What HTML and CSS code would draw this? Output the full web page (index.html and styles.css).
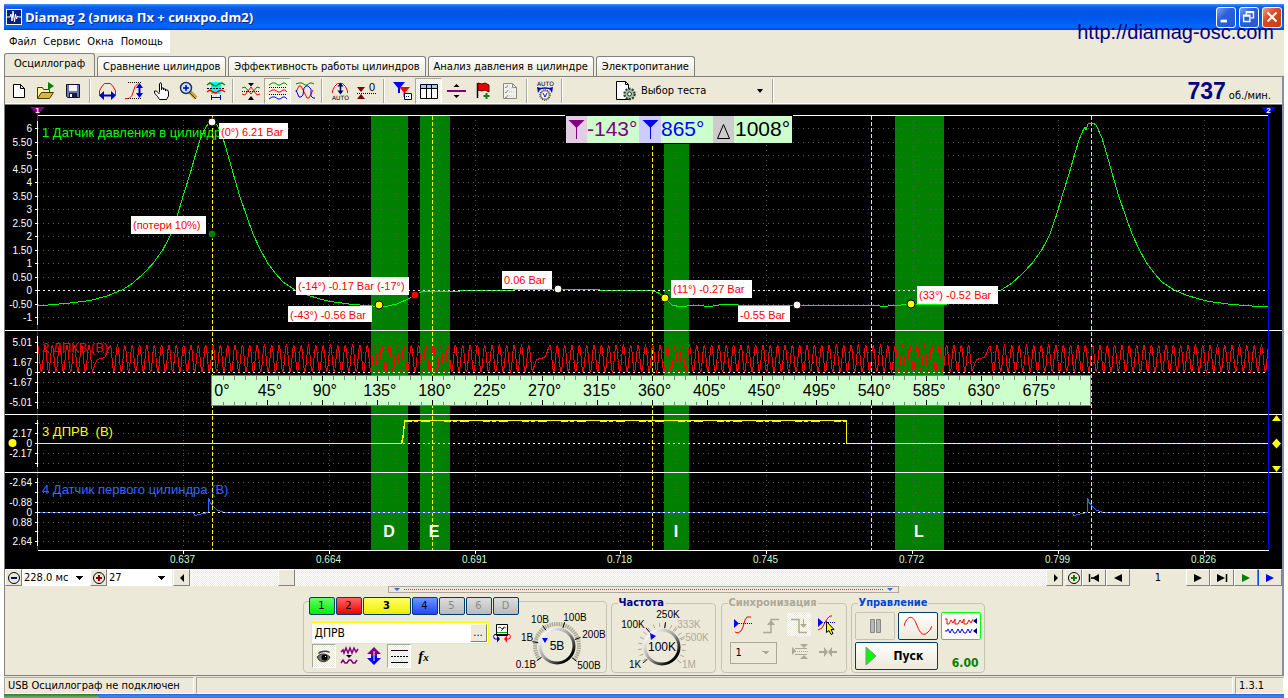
FILE: index.html
```html
<!DOCTYPE html>
<html lang="ru">
<head>
<meta charset="utf-8">
<title>Diamag 2</title>
<link rel="stylesheet" href="styles.css">
</head>
<body>
<div class="window">
  <header class="titlebar">
    <svg class="app-icon" viewBox="0 0 16 16"><rect width="16" height="16" fill="#fff"/><rect x="1" y="1" width="14" height="14" fill="#0a1f80"/><path d="M1 8h3l1-3 1 7 1-10 1.500 11 1-8 1 5 1-3 1 1h3" fill="none" stroke="#fff"/></svg>
    <h1 class="title">Diamag 2 (эпика Пх + синхро.dm2)</h1>
    <button class="win-btn" aria-label="Свернуть"><svg viewBox="0 0 20 20"><path d="M4 13h7v3H4z" fill="#fff"/></svg></button>
    <button class="win-btn" aria-label="Восстановить"><svg viewBox="0 0 20 20"><path d="M7 8V4h8v7h-3M7 5h8" fill="none" stroke="#fff" stroke-width="1.500"/><path d="M4 8h7v7H4zM4 9h7" fill="none" stroke="#fff" stroke-width="1.500"/></svg></button>
    <button class="win-btn win-close" aria-label="Закрыть"><svg viewBox="0 0 20 20"><path d="M5 5l10 10M15 5L5 15" stroke="#fff" stroke-width="2.200"/></svg></button>
    <a class="site-link" href="#">http://diamag-osc.com</a>
  </header>

  <nav class="menubar">
    <button>Файл</button><button>Сервис</button><button>Окна</button><button>Помощь</button>
  </nav>

  <div class="tabs" role="tablist">
    <button class="tab tab-active" role="tab">Осциллограф</button>
    <button class="tab" role="tab">Сравнение цилиндров</button>
    <button class="tab" role="tab">Эффективность работы цилиндров</button>
    <button class="tab" role="tab">Анализ давления в цилиндре</button>
    <button class="tab" role="tab">Электропитание</button>
  </div>

  <main class="frame">
    <div class="toolbar">
      <button class="tool" aria-label="Новый"><svg viewBox="0 0 20 20"><path d="M4.500 3.500h7l4 4v9h-11zM11.500 3.500v4h4" fill="#fff" stroke="#000"/></svg></button>
      <button class="tool" aria-label="Открыть"><svg viewBox="0 0 20 20"><path d="M1.500 17.500v-11h5l1 2h6v3" fill="#fff0a0" stroke="#404000"/><path d="M1.500 17.500l4-6h12l-4 6z" fill="#d8b840" stroke="#404000"/><path d="M12 1l6 4-6 4z" fill="#008000"/></svg></button>
      <button class="tool" aria-label="Сохранить"><svg viewBox="0 0 20 20"><path d="M3.500 3.500h13v13h-12l-1-1z" fill="#6878a8" stroke="#101030"/><path d="M6 4h8v6H6z" fill="#f4f4f8"/><path d="M6 12h8v4H6z" fill="#181838"/><path d="M7 13h2v3H7z" fill="#fff"/></svg></button>
      <span class="sep"></span>
      <button class="tool" aria-label="Масштаб по X"><svg viewBox="0 0 20 20"><path d="M1.500 14v-4l2-4 3-3.500h6l3 3.500 2 4v4" fill="none" stroke="#f00"/><path d="M4 14.500h11" stroke="#00a" stroke-width="2"/><path d="M6 10v9l-5-4.500zM13 10v9l5-4.500z" fill="#00c"/></svg></button>
      <button class="tool" aria-label="Масштаб по Y"><svg viewBox="0 0 20 20"><path d="M0 17.500h4l3-3 3-9 3-3" fill="none" stroke="#f00"/><path d="M3 1.500h14M3 17.500h14" stroke="#000" stroke-dasharray="1 1"/><path d="M14.500 5v9" stroke="#00c" stroke-width="2"/><path d="M11 7h7l-3.500-5zM11 12h7l-3.500 5z" fill="#00c"/></svg></button>
      <button class="tool" aria-label="Рука"><svg viewBox="0 0 20 20"><path d="M7.500 11.500V3l1-1.500L9.500 3v6-2h2v2-1h2v2-1h2l1 2v4l-2 3.500H7.500l-2-3-3-3.500v-2h2l3 3" fill="#fff" stroke="#000"/></svg></button>
      <button class="tool" aria-label="Лупа"><svg viewBox="0 0 20 20"><path d="M11 11l6 6" stroke="#c8a040" stroke-width="4"/><path d="M11 12l6 6" stroke="#404040"/><circle cx="7" cy="7" r="5.500" fill="#c8e8ff" stroke="#203060" stroke-width="1.500"/><path d="M4 7h6M7 4v6" stroke="#00a" stroke-width="1.500"/></svg></button>
      <button class="tool" aria-label="Участок"><svg viewBox="0 0 20 20"><path d="M5 1h10v12H5z" fill="#0ff"/><path d="M1 4l3-2 3 2 3 1 3-2 3-1 3 2" fill="none" stroke="#080" stroke-width="1.500"/><path d="M1 7.500h18" stroke="#000" stroke-dasharray="2 1"/><path d="M1 11l3-2 3 2 3 1 3-2 3-1 3 2" fill="none" stroke="#f00" stroke-width="1.500"/><path d="M5.500 14v5M14.500 14v5M6 16.500h8" stroke="#00a"/></svg></button>
      <span class="sep"></span>
      <button class="tool" aria-label="Центрировать"><svg viewBox="0 0 20 20"><path d="M1 7l3-1 6 7 6-7 3 1" fill="none" stroke="#080"/><path d="M1 13l3 1 6-8 6 8 3-1" fill="none" stroke="#f00"/><path d="M1 10.500h18" stroke="#000" stroke-dasharray="1 1"/><path d="M7 2h6l-3 3.500zM7 19h6l-3-4z"/></svg></button>
      <button class="tool tool-down" aria-label="Раздельно"><svg viewBox="0 0 20 20"><path d="M1 4l3-2h3l3 2h2l3-2h2l2 2" fill="none" stroke="#080"/><path d="M1 6.500h18M1 13.500h18" stroke="#000" stroke-dasharray="1 1"/><path d="M1 11l3-2h3l3 2h2l3-2h2l2 2" fill="none" stroke="#f00"/><path d="M1 18l3-2h3l3 2h2l3-2h2l2 2" fill="none" stroke="#00f"/></svg></button>
      <button class="tool" aria-label="Совместно"><svg viewBox="0 0 20 20"><path d="M1 3l3-1h3l3 2h2l3-2h2l2 1" fill="none" stroke="#080"/><path d="M1 11l3-6h2l6 12h2l4-8" fill="none" stroke="#f00"/><path d="M1 9l3 7h2l2-2 1-7 2-2h2l3 3v7l2 2h2" fill="none" stroke="#00f"/></svg></button>
      <span class="sep"></span>
      <button class="tool" aria-label="Авто"><svg viewBox="0 0 20 20"><path d="M2.500 12v-2l2-4.500 3-3h5l3 3 2 4.500v2" fill="none" stroke="#f00"/><path d="M10.500 4v8" stroke="#006" stroke-width="1.500"/><path d="M7.500 5.500h6l-3-4zM7.500 9.500h6l-3 4z" fill="#006"/><text class="tiny" x="2" y="19">AUTO</text></svg></button>
      <button class="tool" aria-label="Ноль"><svg viewBox="0 0 20 20"><path d="M0 6h8l-4 5z" fill="#800000"/><path d="M0 18h8l-4-5z" fill="#800000"/><path d="M0 12.500h20" stroke="#000" stroke-dasharray="1 1"/><text class="zero" x="12" y="10">0</text></svg></button>
      <span class="sep"></span>
      <button class="tool" aria-label="Фильтр"><svg viewBox="0 0 20 20"><path d="M1 1h12L8 7v5H6V7z" fill="#00f"/><path d="M7 6h11l-4.500 5v5h-2v-5z" fill="#f00"/><path d="M12.500 12.500h7v6h-7z" fill="#fff" stroke="#006"/><path d="M14 15.500h4" stroke="#006" stroke-dasharray="1 1"/></svg></button>
      <button class="tool tool-down" aria-label="Таблица"><svg viewBox="0 0 20 20"><path d="M1.500 3.500h17v14h-17z" fill="#fff" stroke="#000"/><path d="M2 4h16v3H2z" fill="#a0c8f8"/><path d="M1.500 7.500h17M7.500 4v13M12.500 4v13" stroke="#000"/></svg></button>
      <button class="tool" aria-label="Разделить"><svg viewBox="0 0 20 20"><path d="M1 10h19" stroke="#800080" stroke-width="2"/><path d="M7.500 6h6l-3-3zM7.500 14h6l-3 3z"/></svg></button>
      <button class="tool" aria-label="Метка"><svg viewBox="0 0 20 20"><path d="M4.500 2v15" stroke="#000" stroke-width="1.500"/><path d="M5 2l4 1 3-1 4 2v7l-4-2-3 1-4-1z" fill="#e00" stroke="#600"/><path d="M13.500 12v6M10.500 15h6" stroke="#080" stroke-width="2"/></svg></button>
      <button class="tool" aria-label="Список"><svg viewBox="0 0 20 20"><path d="M3.500 2.500h9l4 4v11h-13zM12.500 2.500v4h4" fill="#f4f3ea" stroke="#888"/><path d="M5 6l1 1 2-3M5 11l1 1 2-3M5 16l1 1 2-3" fill="none" stroke="#888"/><path d="M9 7h5M9 11h5M9 15h5" stroke="#bbb" stroke-dasharray="1 1"/></svg></button>
      <span class="sep"></span>
      <button class="tool" aria-label="Авто V"><svg viewBox="0 0 20 20"><text class="tiny" x="2" y="5">AUTO</text><path d="M4 8.500c2-2 10-2 12 0" fill="none" stroke="#00c" stroke-width="1.500"/><path d="M2 6l4 1-3 5zM18 6l-4 1 3 5z" fill="#00c"/><circle cx="10" cy="14" r="5.200" fill="none" stroke="#000" stroke-dasharray="1 1"/><circle cx="10" cy="14" r="4.200" fill="#fff" stroke="#555"/><path d="M8 12l2 4 2-4" fill="none" stroke="#00f"/></svg></button>
      <span class="sep"></span>
      <button class="test-select">
        <svg viewBox="0 0 20 20"><path d="M.5.500h9l3 3v15H.5z" fill="#fff" stroke="#000"/><path d="M9.500.500v3h3" fill="none" stroke="#000"/><circle cx="13.500" cy="13" r="5" fill="#a8c0a8" stroke="#304030" stroke-width="2.500" stroke-dasharray="2 1.140"/><circle cx="13.500" cy="13" r="4" fill="#a8c0a8"/><circle cx="13.500" cy="13" r="2" fill="#e8f0e8" stroke="#304030"/></svg>
        <span>Выбор теста</span><i class="caret"></i>
      </button>
      <span class="sep"></span>
      <div class="rpm"><strong>737</strong><span>об./мин.</span></div>
    </div>

    <svg class="scope" id="scope" viewBox="5 105 1277 464" role="img" aria-label="Осциллограммы"></svg>

    <div class="scroll-row">
      <button class="sq" aria-label="Уменьшить"><svg viewBox="0 0 14 14"><circle cx="7" cy="7" r="5.500" fill="none" stroke="#000"/><path d="M4 7h6" stroke="#000080" stroke-width="2"/></svg></button>
      <select class="time-select" aria-label="Развертка"><option>228.0 мс</option></select>
      <button class="sq" aria-label="Увеличить"><svg viewBox="0 0 14 14"><circle cx="7" cy="7" r="5.500" fill="none" stroke="#000"/><path d="M4 7h6M7 4v6" stroke="#800000" stroke-width="2"/></svg></button>
      <select class="frame-select" aria-label="Кадр"><option>27</option></select>
      <button class="sq" aria-label="Влево"><svg viewBox="0 0 14 14"><path d="M9 3v8L5 7z"/></svg></button>
      <div class="track"><span class="thumb"></span></div>
      <button class="sq" aria-label="Вправо"><svg viewBox="0 0 14 14"><path d="M6 3v8l4-4z"/></svg></button>
      <button class="sq sq-gap" aria-label="Добавить"><svg viewBox="0 0 14 14"><circle cx="7" cy="7" r="5.500" fill="none" stroke="#000"/><path d="M4 7h6M7 4v6" stroke="#008000" stroke-width="2"/></svg></button>
      <button class="nav" aria-label="Первый"><svg viewBox="0 0 14 14"><path d="M2.500 3v8M4 7h2" stroke="#000" stroke-width="1.500"/><path d="M12 3v8L5 7z"/></svg></button>
      <button class="nav" aria-label="Назад"><svg viewBox="0 0 14 14"><path d="M11 3v8L3 7z"/></svg></button>
      <output class="page-no">1</output>
      <button class="nav" aria-label="Вперед"><svg viewBox="0 0 14 14"><path d="M3 3v8l8-4z"/></svg></button>
      <button class="nav" aria-label="Последний"><svg viewBox="0 0 14 14"><path d="M11.500 3v8" stroke="#000" stroke-width="1.500"/><path d="M2 3v8l8-4z"/></svg></button>
      <button class="nav" aria-label="Играть"><svg viewBox="0 0 14 14"><path d="M3 3v8l8-4z" fill="#008000"/></svg></button>
      <button class="nav nav-next" aria-label="Играть дальше"><svg viewBox="0 0 14 14"><path d="M3 3v8l8-4z" fill="#00f"/></svg></button>
    </div>
    <div class="splitter"><i></i><span></span><i></i></div>

    <div class="panels">
      <section class="group channel-group">
        <div class="channel-side">
          <div class="channels">
            <button class="ch ch-1">1</button><button class="ch ch-2">2</button><button class="ch ch-3">3</button><button class="ch ch-4">4</button><button class="ch ch-off" disabled>5</button><button class="ch ch-off" disabled>6</button><button class="ch ch-off" disabled>D</button>
          </div>
          <div class="name-row">
            <div class="name-box"><input type="text" value="ДПРВ" aria-label="Имя канала"><button aria-label="Выбрать">...</button></div>
            <button class="icon-btn" aria-label="Датчик"><svg viewBox="0 0 20 20"><path d="M4.500 1.500h11v11h-11z" fill="#fff" stroke="#000"/><path d="M6 5l2-1 2 2 2-2 2 1M9 8l3-3" fill="none" stroke="#444"/><path d="M5 9.500h10" stroke="#0a0"/><path d="M5 11h10v2H5z"/><path d="M4 11.500H2.500l-1 2 1 2.500H5" fill="none" stroke="#000080"/><path d="M5 12.500v7l3-3.500z" fill="#000080"/><path d="M16 11.500h1.500l1 2-1 2.500H15" fill="none" stroke="#f00"/><path d="M15 12.500v7l-3-3.500z" fill="#f00"/></svg></button>
          </div>
          <div class="icon-row">
            <button class="icon-btn icon-down" aria-label="Видимость"><svg viewBox="0 0 20 20"><path d="M4 7c3-3 9-3 12-1l-1 1c-3-2-7-1-10 1z" fill="#444"/><path d="M3 11c3-4 9-4 13 0-2 5-8 6-11 3z" fill="#777" stroke="#333"/><circle cx="10.500" cy="11.500" r="3"/><path d="M11 10h1v1h-1z" fill="#fff"/></svg></button>
            <button class="icon-btn" aria-label="Фильтр"><svg viewBox="0 0 20 20"><path d="M2 6l2-2 1 3 2-5 2 5 2-5 2 5 2-5 2 4 2-3M2 17l2-3 2 3h2l2-3h2l2 3h2l2-3" fill="none" stroke="#800080" stroke-width="1.500"/><path d="M7 9h6l-3 3z"/></svg></button>
            <button class="icon-btn" aria-label="Сдвиг"><svg viewBox="0 0 20 20"><path d="M10 1l7 7h-4v2H7V8H3z" fill="#800080"/><path d="M10 19l7-7h-4v-2H7v2H3z" fill="#00f"/><path d="M10 5v10" stroke="#ece9d8"/></svg></button>
            <button class="icon-btn icon-down" aria-label="Пороги"><svg viewBox="0 0 20 20"><path d="M2 4.500h17M2 16.500h17" stroke="#000"/><path d="M2 10.500h17" stroke="#000" stroke-dasharray="2 1"/></svg></button>
            <button class="icon-btn fx" aria-label="Функция"><i>f<small>x</small></i></button>
          </div>
        </div>
        <svg class="knob" id="knob-volts" viewBox="519 608 87 63"></svg>
      </section>

      <fieldset class="group freq-group">
        <legend>Частота</legend>
        <svg class="knob" id="knob-freq" viewBox="612 609 103 61"></svg>
      </fieldset>

      <fieldset class="group sync-group">
        <legend class="muted">Синхронизация</legend>
        <div class="sync-row">
          <button class="icon-btn" aria-label="Запуск"><svg viewBox="0 0 20 20"><path d="M2 17l3 1 3-2 2-4 2-7 2-3h4" fill="none" stroke="#f00"/><path d="M2 8.500h17" stroke="#00a" stroke-dasharray="1 1"/><path d="M1 4v9l5-4.500z" fill="#00f"/></svg></button>
          <button class="icon-btn" aria-label="Фронт"><svg viewBox="0 0 20 20"><path d="M2 17.500h8V4.500h8" fill="none" stroke="#aca899" stroke-width="1.500"/><path d="M6 10h8l-4-5z" fill="#aca899"/></svg></button>
          <button class="icon-btn icon-dither" aria-label="Спад"><svg viewBox="0 0 20 20"><path d="M2 4.500h8v13h8" fill="none" stroke="#aca899" stroke-width="1.500"/><path d="M11 9h7l-3.500 4z" fill="#aca899"/><path d="M14.500 4v6" stroke="#aca899"/></svg></button>
          <button class="icon-btn" aria-label="Уровень"><svg viewBox="0 0 20 20"><path d="M1 15l4-2 5-9 3-3h2" fill="none" stroke="#f00"/><path d="M1 7.500h18" stroke="#00a" stroke-dasharray="1 1"/><path d="M1 3v9l5-4.500z" fill="#00f"/><path d="M9.500 6.500v11l2.500-2 2 4 2-1-2-4h3z" fill="#ff0" stroke="#000"/></svg></button>
        </div>
        <div class="sync-row">
          <select class="sync-select" aria-label="Канал синхронизации" disabled><option>1</option></select>
          <button class="icon-btn" aria-label="Диапазон"><svg viewBox="0 0 20 20"><path d="M2 5v8l4-4zM10 2h8l-4 4zM10 17h8l-4-4z" fill="#aca899"/><path d="M5 6.500h12M5 12.500h12" stroke="#aca899"/><path d="M5 9.500h13" stroke="#aca899" stroke-dasharray="1 1"/></svg></button>
          <button class="icon-btn" aria-label="Сжать"><svg viewBox="0 0 20 20"><path d="M1 9h5V5l4 5-4 5v-4H1zM19 9h-5V5l-4 5 4 5v-4h5z" fill="#aca899"/></svg></button>
        </div>
      </fieldset>

      <fieldset class="group run-group">
        <legend class="bright">Управление</legend>
        <div class="run-grid">
          <button class="xp xp-off" aria-label="Пауза" disabled><svg viewBox="0 0 28 20"><path d="M9.500 3.500h4v13h-4zM15.500 3.500h4v13h-4z" fill="#b8b8b8" stroke="#888"/></svg></button>
          <button class="xp" aria-label="Один сигнал"><svg viewBox="0 0 28 20"><path d="M0 10C3-1 9-1 12 7s6 14 11 10q3-2 5-7" fill="none" stroke="#f00"/></svg></button>
          <button class="xp xp-on" aria-label="Поток"><svg viewBox="0 0 32 20"><path d="M0 3h2v5h2l2-4 2 3 2-4v5h3l2-4 2 3 2-4v5h3l2-4 2 3 2-4" fill="none" stroke="#f00"/><path d="M28 5l4-3v6z" fill="#000080"/><path d="M0 15h2l1-2 2 4 2-4 2 4h2l2-4 2 4 2-4 2 4h2l2-4 2 4 2-4" fill="none" stroke="#00f"/><path d="M28 15l4-3v6z" fill="#000080"/></svg></button>
          <button class="xp start"><svg viewBox="0 0 12 20"><path d="M1 1v18l10-9z" fill="#0f0" stroke="#888"/></svg><span>Пуск</span></button>
          <strong class="value">6.00</strong>
        </div>
      </fieldset>
    </div>
  </main>

  <footer class="status">
    <span class="status-main">USB Осциллограф не подключен</span>
    <span class="status-fill"></span>
    <span class="status-version">1.3.1</span>
  </footer>
  <div class="taskbar"><span></span></div>
</div>
<script src="script.js"></script>
</body>
</html>
```
FILE: styles.css
```css
* { box-sizing: border-box; }
body {
  margin: 0;
  background: #fff;
  font: 11px/14px "DejaVu Sans Condensed", "DejaVu Sans", sans-serif;
  color: #000;
}
button, input, select { font: inherit; color: inherit; margin: 0; padding: 0; border: 0; border-radius: 0; background: none; }
.window {
  display: flex;
  flex-direction: column;
  min-height: 100vh;
  padding: 4px 4px 0;
}
.window > * { flex-shrink: 0; }

/* title bar */
.titlebar {
  position: relative;
  display: flex;
  align-items: center;
  gap: 3px;
  height: 26px;
  padding: 0 2px;
  background: linear-gradient(#3c96ff 0, #0f62ee 10%, #0054e3 30%, #0058ee 60%, #0068ff 85%, #0062f5 92%, #003dd7 100%);
}
.app-icon { width: 16px; height: 16px; }
.title {
  flex: 1;
  margin: 0;
  font: bold 13px/16px "Open Sans", "Noto Sans", sans-serif;
  color: #fff;
  text-shadow: 1px 1px #0a2a80;
}
.win-btn {
  width: 20px;
  height: 21px;
  border: 1px solid #fff;
  border-radius: 3px;
  background: linear-gradient(135deg, #7da2f0, #2a60dc 40%, #2258d8);
}
.win-btn svg { display: block; width: 18px; height: 18px; }
.win-close { background: linear-gradient(135deg, #f0a088, #dc4a20 40%, #c83c10); }
.site-link {
  position: absolute;
  right: 10px;
  top: 17px;
  font: 20px/23px "Liberation Sans", sans-serif;
  color: #000080;
  text-decoration: none;
}

/* menu */
.menubar { display: flex; height: 23px; background: linear-gradient(90deg, #fff 166px, #ece9d8 166px); padding-left: 5px; gap: 7px; }

/* tabs */
.tabs { display: flex; align-items: flex-end; gap: 2px; height: 23px; background: #ece9d8; }
.tab {
  height: 20px;
  padding: 0 5px;
  border: 1px solid #808080;
  border-width: 1px 1px 0;
  border-radius: 3px 3px 0 0;
  background: linear-gradient(#fff, #ece9d8);
}
.tab-active { height: 23px; padding: 0 9px 2px; background: #ece9d8; }

/* working area */
.frame {
  flex: 1 0 auto;
  display: flex;
  flex-direction: column;
  background: #ece9d8;
  border: 1px solid #808080;
  border-right: 2px solid #8090a8;
}
.toolbar {
  display: flex;
  align-items: center;
  height: 28px;
  border-bottom: 1px solid #808080;
  box-shadow: inset 0 -1px #fff;
}
.tool { width: 27px; height: 26px; display: grid; place-items: center; }
.tool svg { width: 20px; height: 20px; }
.tool-down, .icon-down {
  border: 1px solid;
  border-color: #aca899 #fff #fff #aca899;
}
.tool-down, .icon-down, .icon-dither, .track {
  background: repeating-conic-gradient(#fff 0 25%, #ece9d8 0 50%) 0 0 / 2px 2px;
}
.sep { width: 8px; height: 24px; padding-left: 3px; }
.sep::before { content: ""; display: block; width: 2px; height: 24px; background: linear-gradient(90deg, #aca899 50%, #fff 50%); }
.tiny { font: 6px "DejaVu Sans", sans-serif; }
.zero { font: 11px "Liberation Sans", sans-serif; }
.test-select {
  display: flex;
  align-items: center;
  gap: 5px;
  width: 203px;
  height: 24px;
  padding: 0 6px 0 50px;
}
.test-select svg { width: 20px; height: 20px; }
.caret { margin-left: auto; border: 3px solid transparent; border-top: 4px solid #000; border-bottom: 0; }
.rpm { margin-left: auto; padding-right: 11px; white-space: nowrap; }
.rpm strong { font: bold 23px/26px "Liberation Sans", sans-serif; color: #000080; margin-right: 3px; }

/* oscilloscope */
.scope { display: block; width: 100%; height: auto; background: #000; }
.scope text, .knob text { font-family: "Liberation Sans", sans-serif; }
.scope .axis { font-size: 10px; fill: #fff; text-anchor: end; }
.scope .time { font-size: 10px; fill: #cfc; text-anchor: middle; }
.scope .name { font-size: 13px; white-space: pre; }
.scope .deg { font-size: 16px; fill: #000; text-anchor: middle; }
.scope .phase { font: bold 16px "Liberation Sans", sans-serif; fill: #fff; text-anchor: middle; }
.scope .note { font-size: 11px; fill: #f00; }
.scope .cursor { font-size: 21px; }
.scope .flag { font-size: 8px; font-weight: bold; fill: #fff; text-anchor: middle; }

/* scroll row */
.scroll-row { display: flex; height: 17px; }
.sq, .nav {
  width: 17px;
  height: 17px;
  display: grid;
  place-items: center;
  background: #ece9d8;
  border: 1px solid;
  border-color: #fff #808080 #808080 #fff;
}
.sq svg, .nav svg { width: 14px; height: 14px; }
.sq-gap { margin-left: 2px; }
.nav { width: 24px; }
.nav-next { border-left-color: #0054e3; }
.time-select, .frame-select {
  width: 68px;
  appearance: none;
  padding-left: 2px;
  line-height: 16px;
  background: linear-gradient(225deg, #000 50%, transparent 50%) right 10px top 7px / 4px 4px no-repeat, linear-gradient(135deg, #000 50%, transparent 50%) right 6px top 7px / 4px 4px no-repeat, #fff;
}
.frame-select { width: 65px; margin-right: 1px; }
.track { flex: 1; padding-left: 88px; }
.thumb { display: block; width: 17px; height: 17px; background: #ece9d8; border: 1px solid; border-color: #fff #808080 #808080 #fff; }
.page-no { width: 56px; text-align: center; line-height: 17px; }

.splitter {
  align-self: center;
  display: flex;
  align-items: center;
  gap: 4px;
  width: 40%;
  height: 7px;
  padding: 0 5px;
  border: 1px solid #aca899;
}
.splitter span { flex: 1; border-top: 1px dotted #316ac5; }
.splitter i { border: 3px solid transparent; border-top: 3px solid #316ac5; border-bottom: 0; }

/* control panels */
.panels {
  flex: 1;
  display: flex;
  justify-content: center;
  align-items: flex-end;
  gap: 4px;
  padding: 4px 0 2px;
}
.group { margin: 0; padding: 0; border: 1px solid #c6c3b4; border-radius: 4px; min-width: 0; }
.group legend { margin-left: 6px; padding: 0 1px; font: bold 11px/12px "DejaVu Sans Condensed", "DejaVu Sans", sans-serif; color: #000080; }
.group .muted { color: #aca899; }
.group .bright { color: #0046d5; }
.channel-group { display: flex; width: 304px; height: 72px; padding-left: 5px; }
.channel-side { width: 210px; }
.channels { display: flex; gap: 1px; margin-top: -5px; background: #ece9d8; }
.ch { width: 26px; height: 18px; border: 1px solid #003c74; border-radius: 2px; }
.ch-1 { background: linear-gradient(#6f6, #0e0); }
.ch-2 { background: linear-gradient(#f66, #e00); }
.ch-3 { width: 48px; background: linear-gradient(#ff6, #ee0); font-weight: bold; }
.ch-4 { background: linear-gradient(#69f, #24f); }
.ch-off { background: linear-gradient(#ddd, #bbb); color: #888; }
.name-row { display: flex; gap: 3px; padding: 7px 0 0 2px; }
.name-box { display: flex; width: 178px; height: 22px; padding: 1px; border: 1px solid #ff0; background: #fff; }
.name-box input { flex: 1; min-width: 0; font-size: 12px; padding-left: 2px; background: #fff; }
.name-box button { width: 17px; background: #ece9d8; border: 1px solid; border-color: #fff #808080 #808080 #fff; line-height: 8px; }
.icon-btn { width: 24px; height: 24px; display: grid; place-items: center; }
.icon-btn svg { width: 20px; height: 20px; }
.name-row .icon-btn { height: 22px; width: 21px; }
.icon-row { display: flex; gap: 1px; padding-left: 3px; }
.fx { font: bold 15px/20px "Liberation Serif", serif; }
.fx small { font-size: 11px; }
.knob { display: block; overflow: visible; }
.channel-group .knob { width: 87px; height: 63px; margin-top: 6px; }
.freq-group { width: 105px; height: 76px; }
.freq-group .knob { width: 103px; height: 61px; }
.knob text { font-size: 10px; text-anchor: middle; }
.knob .big { font-size: 12px; }
.sync-group { width: 126px; height: 76px; margin-left: 1px; }
.sync-row { display: flex; gap: 4px; padding: 4px 0 0 9px; }
.sync-row .icon-btn { height: 23px; }
.sync-row .sync-select {
  width: 47px;
  height: 22px;
  margin: 2px 7px 0 -1px;
  padding-left: 5px;
  appearance: none;
  opacity: 1;
  color: #000;
  border: 1px solid #aca899;
  background: linear-gradient(225deg, #aca899 50%, transparent 50%) right 10px top 8px / 4px 4px no-repeat, linear-gradient(135deg, #aca899 50%, transparent 50%) right 6px top 8px / 4px 4px no-repeat;
}
.run-group { width: 134px; height: 76px; }
.run-grid { display: grid; grid-template-columns: 40px 40px 40px; gap: 2px 3px; padding: 3px 3px 0; }
.xp { height: 28px; border: 1px solid #003c74; border-radius: 2px; background: linear-gradient(#fff, #ece9d8); display: grid; place-items: center; }
.xp svg { width: 28px; height: 20px; }
.xp-off { border-color: #c6c3b4; background: #ece9d8; }
.xp-on { border: 1px solid #0f0; background: #fff; }
.xp-on svg { width: 32px; }
.start { grid-column: span 2; display: flex; align-items: center; padding-left: 9px; font-weight: bold; font-size: 12px; }
.start svg { width: 12px; }
.start span { margin-left: 17px; }
.value { align-self: end; text-align: right; padding: 0 2px 0 0; color: #008000; font-size: 12px; }

/* status bar */
.status { display: flex; gap: 2px; height: 18px; padding-top: 1px; background: #ece9d8; }
.status span { border: 1px solid; border-color: #aca899 #fff #fff #aca899; padding-left: 3px; line-height: 15px; }
.status-main { width: 190px; }
.status-fill { flex: 1; }
.status-version { width: 49px; }
.taskbar { height: 4px; background: linear-gradient(#1f5fd8, #3c8cf0 50%, #2a6ee0); }
.taskbar span { display: block; width: 95px; height: 4px; background: linear-gradient(#2c7a2c, #6cb86c); border-radius: 0 4px 0 0; }
```
FILE: script.js
```js
const NS = 'http://www.w3.org/2000/svg';
function add(parent, tag, attrs, text) {
  const el = document.createElementNS(NS, tag);
  for (const k in attrs) el.setAttribute(k, attrs[k]);
  if (text !== undefined) el.textContent = text;
  parent.appendChild(el);
  return el;
}
const scope = document.getElementById('scope');
const LEFT = 37.5, RIGHT = 1268.5, CYCLE = 879;
const line = (x1, y1, x2, y2, stroke, extra) =>
  add(scope, 'line', Object.assign({ x1, y1, x2, y2, stroke, 'shape-rendering': 'crispEdges' }, extra));
const rect = (x, y, width, height, fill) => add(scope, 'rect', { x, y, width, height, fill });
const trace = (pts, stroke) =>
  add(scope, 'polyline', { points: pts.map(p => p.join()).join(' '), fill: 'none', stroke, 'shape-rendering': 'crispEdges' });

// valve phases
const phases = [['D', 371, 37, 389], ['E', 420, 30, 434], ['I', 664, 25, 676], ['L', 895, 49, 919]];
phases.forEach(p => rect(p[1], 116, p[2], 434, '#008000'));

// channel axes: [y, label]
const axes = [
  { top: 121, bottom: 325, zero: 290.5, marks: [[128.5, '6'], [142.5, '5.50'], [155.5, '5'], [169.5, '4.50'], [182.5, '4'], [196.5, '3.50'], [209.5, '3'], [223.5, '2.50'], [236.5, '2'], [250.5, '1.50'], [263.5, '1'], [277.5, '0.50'], [290.5, '0'], [304.5, '-0.50'], [317.5, '-1']] },
  { top: 336, bottom: 409, zero: 372.5, marks: [[342.5, '5.01'], [352.5], [362.5, '1.67'], [372.5, '0'], [382.5, '-1.67'], [392.5], [402.5, '-5.01']] },
  { top: 420, bottom: 467, zero: 443.5, marks: [[423.5], [433.5, '2.17'], [443.5, '0'], [453.5, '-2.17'], [463.5]] },
  { top: 478, bottom: 546, zero: 512.5, marks: [[482.5, '-2.64'], [492.5], [502.5, '-0.88'], [512.5, '0'], [522.5, '0.88'], [531.5], [541.5, '2.64']] }
];
line(LEFT, 114, LEFT, 550, '#800080');
axes.forEach(a => {
  line(LEFT, a.top, LEFT, a.bottom, '#fff');
  a.marks.forEach(m => {
    line(LEFT, m[0], RIGHT, m[0], '#555', { 'stroke-dasharray': '1 4' });
    line(35, m[0], 38, m[0], '#fff');
    if (m[1]) add(scope, 'text', { x: 32, y: m[0] + 3, class: 'axis' }, m[1]);
  });
});
['0.637', '0.664', '0.691', '0.718', '0.745', '0.772', '0.799', '0.826'].forEach((t, i) => {
  const x = Math.round(183 + i * 145.8) + 0.5;
  line(x, 120, x, 550, '#555', { 'stroke-dasharray': '1 4' });
  line(x, 551, x, 554, '#fff');
  add(scope, 'text', { x: x - 1, y: 563, class: 'time' }, t);
});

// channel names
[['1 Датчик давления в цилиндр', 137, '#0f0'], ['2 ДПКВ (В)', 352, '#f00'], ['3 ДПРВ  (В)', 436, '#ff0'], ['4 Датчик первого цилиндра (В)', 494, '#36f']]
  .forEach(n => add(scope, 'text', { x: 42, y: n[1], fill: n[2], class: 'name' }, n[0]));

// top dead centre cursors
[212.5, 432.5, 652.5, 871.5, 1091.5].forEach(x => line(x, 116, x, 550, '#ff0', { 'stroke-dasharray': '4 2' }));

// channel 1: pressure
const rise = [[38, 305.5], [48, 305], [70, 303], [90, 300.5], [107, 296], [123, 289.5], [133, 283], [143, 274], [153, 263.5], [163, 249.5], [171, 234], [177, 216.5], [183, 196.5], [190, 174], [195, 156.5], [200, 140], [204, 130.5], [208, 124], [212, 122]];
const fall = [[217, 125], [223, 138], [228, 155], [233, 173], [240, 197], [247, 217], [253, 234], [260, 249], [267, 262], [275, 273], [283, 282], [295, 290], [307, 295], [320, 299], [330, 301.5], [353, 304.5], [379, 306.5]];
const middle = [[388, 306], [397, 304], [408, 299], [415, 295], [422, 291.5], [450, 291.5], [470, 290.5], [557, 289.5], [597, 289.5], [602, 290.5], [650, 290.5], [658, 292.5], [665, 298], [672, 305], [681, 307], [693, 305], [710, 306.5], [722, 304.5], [736, 304.5], [742, 306], [797, 305.5], [875, 305.5], [885, 306.5], [892, 305.5], [911, 304.5], [940, 304.5], [960, 303]];
const shift = p => [p[0] + CYCLE, p[1]];
trace(rise.concat(fall, middle, rise.slice(3, -2).map(shift), [[1085, 127], [1086, 130], [1088, 124], [1089, 123], [1093, 123]], fall.map(shift), [[1268, 306.5]]), '#0f0');

// channel 2: crankshaft sensor, 60-2 teeth
const gap = [[0, 371], [2, 365], [4, 360], [6, 359], [12, 357.5], [14, 354], [16, 348], [17.5, 346]];
const crank = [];
for (let x = 38; x <= 1268; x += 0.5) {
  const u = (((x - 92.7) % 439.8) + 439.8) % 439.8;
  let y;
  if (u < 17.5) {
    const i = gap.findIndex(g => g[0] > u), a = gap[i - 1], b = gap[i];
    y = a[1] + (b[1] - a[1]) * (u - a[0]) / (b[0] - a[0]);
  } else {
    y = 358.5 - 13 * Math.cos((u - 17.5) / (422.3 / 57.5) * 2 * Math.PI);
  }
  crank.push([x, y.toFixed(1)]);
}
trace(crank, '#f00');

// channel 4: first cylinder ignition
const spark = [[193, 512.5], [195, 515.5], [203, 513.5], [208, 512.5], [208.5, 498], [210, 502], [213, 506], [217, 510], [224, 512.5]];
trace([[38, 512.5]].concat(spark, spark.map(shift), [[1268, 512.5]]), '#36f');

// channel 3: camshaft sensor
line(847, 443.5, RIGHT, 443.5, '#ff0');
axes.forEach(a => line(LEFT, a.zero, RIGHT, a.zero, '#fff', { 'stroke-dasharray': '2 3' }));
line(38, 443.5, 402, 443.5, '#ff0');
trace([[401.5, 443.5], [403.5, 432], [404.5, 420.5], [846.5, 420.5], [846.5, 443.5]], '#ff0');
line(402.5, 443, 404.5, 424, '#ff0');
line(405, 421.5, 847, 421.5, '#ff0', { 'stroke-dasharray': '7 2 4 3 9 14' });

// separators
line(LEFT, 115.5, RIGHT, 115.5, '#fff');
[330.5, 414.5, 472.5].forEach(y => line(5, y, 1282, y, '#fff'));
line(LEFT, 550.5, RIGHT, 550.5, '#fff');
line(RIGHT, 107, RIGHT, 550, '#00f');

// degree ruler
add(scope, 'rect', { x: 211.5, y: 375.5, width: 879, height: 30, fill: '#cfc', stroke: '#808080' });
for (let i = 1; i < 80; i++) {
  const x = Math.round(212 + i * 10.99) + 0.5, major = i % 5 === 0;
  line(x, 376, x, major ? 381 : 380, major ? '#000' : '#808080');
  line(x, major ? 400 : 402, x, 405, major ? '#000' : '#808080');
}
for (let d = 0; d < 720; d += 45) {
  add(scope, 'text', { x: d ? 215 + d * CYCLE / 720 : 222, y: 396, class: 'deg' }, d + '°');
}
phases.forEach(p => add(scope, 'text', { x: p[3], y: 537, class: 'phase' }, p[0]));

// measurement notes
[[219, 123, 69, 16, '(0°) 6.21 Bar'], [131, 216, 75, 18, '(потери 10%)'], [296, 277, 113, 18, '(-14°) -0.17 Bar (-17°)'], [288, 306, 84, 16, '(-43°) -0.56 Bar'], [502, 271, 50, 18, '0.06 Bar'], [671, 280, 81, 18, '(11°) -0.27 Bar'], [738, 306, 52, 16, '-0.55 Bar'], [917, 286, 81, 18, '(33°) -0.52 Bar']]
  .forEach(n => {
    rect(n[0], n[1], n[2], n[3], '#fff');
    add(scope, 'text', { x: n[0] + 2, y: n[1] + 13, class: 'note' }, n[4]);
  });
[[212, 122, '#fff'], [212, 234, '#008000'], [379, 305, '#ff0'], [415, 295, '#f00'], [558, 289, '#fff'], [665, 298, '#ff0'], [797, 305, '#fff'], [911, 304, '#ff0']]
  .forEach(d => add(scope, 'circle', { cx: d[0], cy: d[1], r: 4, fill: d[2], stroke: '#000' }));
add(scope, 'circle', { cx: 12.5, cy: 443, r: 4, fill: '#ff0' });
add(scope, 'path', { d: 'M1272 421h9l-4.500-6zM1272 466h9l-4.500 6zM1276.500 438.500l4.500 5-4.500 5-4.500-5z', fill: '#ff0' });

// cursor flags
[[37.5, '#800080', '1'], [1268.5, '#00f', '2']].forEach(f => {
  add(scope, 'path', { d: `M${f[0] - 7.5} 107h15l-7.500 8z`, fill: f[1] });
  add(scope, 'text', { x: f[0], y: 113, class: 'flag' }, f[2]);
});

// cursor readout
rect(565, 115, 228, 29, '#000');
rect(566, 116, 226, 27, '#cfc');
rect(566, 116, 21, 27, '#e4cce4');
rect(639, 116, 22, 27, '#ccf');
rect(713, 116, 21, 27, '#ccc');
[[576.5, '#800080'], [650.5, '#00f']].forEach(c => {
  add(scope, 'path', { d: `M${c[0] - 8} 120h16l-8 8z`, fill: c[1] });
  line(c[0], 120, c[0], 139, c[1]);
});
add(scope, 'path', { d: 'M717.500 138.500h12l-6-14z', fill: 'none', stroke: '#000' });
[[587, '-143°', '#800080'], [661, '865°', '#00f'], [735, '1008°', '#000']]
  .forEach(t => add(scope, 'text', { x: t[0], y: 136, fill: t[2], class: 'cursor' }, t[1]));

// rotary knobs
function knob(id, cx, cy, value, pointer, labels) {
  const k = document.getElementById(id);
  const g = add(add(k, 'defs', {}), 'linearGradient', { id: id + '-rim', x1: 0, y1: 0, x2: 1, y2: 1 });
  add(g, 'stop', { offset: 0.1, 'stop-color': '#fff' });
  add(g, 'stop', { offset: 0.5, 'stop-color': '#999' });
  add(g, 'stop', { offset: 0.85, 'stop-color': '#000' });
  const tick = (deg, r1, r2, stroke, w) => {
    const a = deg * Math.PI / 180;
    add(k, 'line', { x1: cx + r1 * Math.cos(a), y1: cy + r1 * Math.sin(a), x2: cx + r2 * Math.cos(a), y2: cy + r2 * Math.sin(a), stroke, 'stroke-width': w });
  };
  const volts = id === 'knob-volts';
  for (let d = -216; d <= 36; d += volts ? 6 : 15) tick(d, 20, 24, '#aca899', volts ? 1.5 : 1);
  labels.forEach(l => {
    tick(l[3], 19, 25, l[4] || '#000', 1);
    add(k, 'text', { x: l[0], y: l[1], fill: l[4] || '#000' }, l[2]);
  });
  add(k, 'circle', { cx, cy, r: 17, fill: '#ece9d8', stroke: `url(#${id}-rim)`, 'stroke-width': 3 });
  add(k, 'path', { d: pointer, fill: '#00f' });
  add(k, 'text', { x: cx, y: cy + 4, class: 'big' }, value);
}
knob('knob-volts', 557, 646, '5В', 'M542 638h6l-3 5z', [[526, 668, '0.1В', 144], [527, 641, '1В', 190], [540, 623, '10В', 235], [575, 621, '100В', 288], [594, 638, '200В', 340], [589, 669, '500В', 38]]);
knob('knob-freq', 662, 647, '100K', 'M650 633l6 3-5 4z', [[635, 668, '1K', 140], [633, 628, '100K', 230], [668, 618, '250K', 278], [689, 628, '333K', 305, '#aca899'], [697, 641, '500K', 335, '#aca899'], [689, 668, '1M', 40, '#aca899']]);
```
